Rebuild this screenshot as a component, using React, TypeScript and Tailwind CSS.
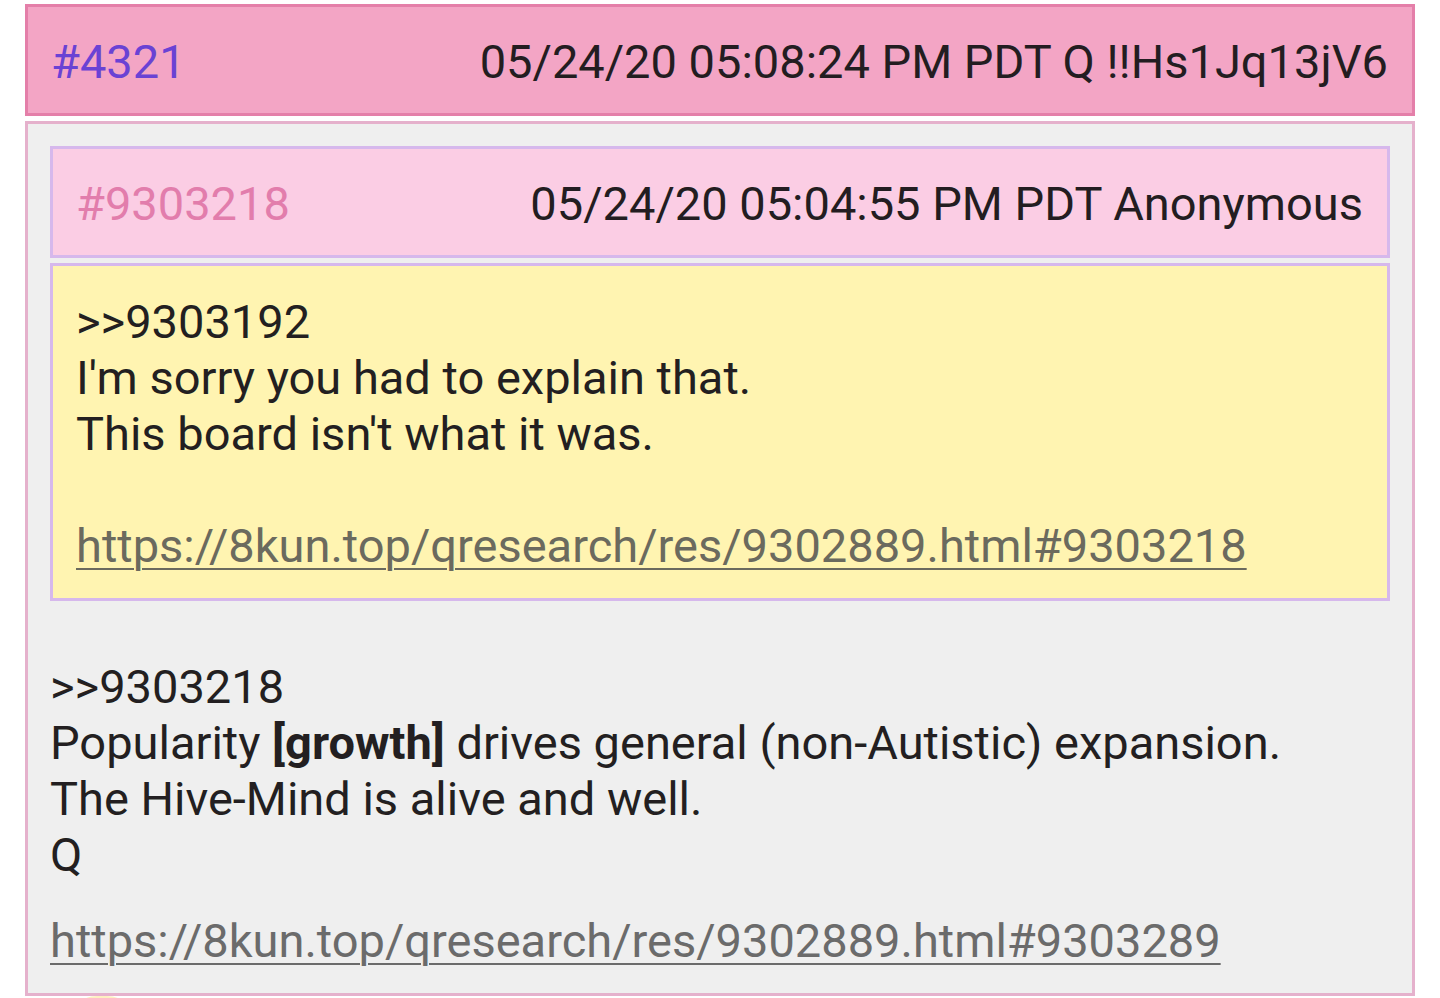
import React from "react";

const font = { fontFamily: "Roboto, 'Noto Sans', Arial, sans-serif" };

function PostHeader({
  id,
  meta,
  idClass,
  boxClass,
}: {
  id: string;
  meta: string;
  idClass: string;
  boxClass: string;
}) {
  return (
    <div className={`flex items-center justify-between h-[112px] pl-[23px] pr-6 pt-[4px] ${boxClass}`}>
      <span className={idClass}>{id}</span>
      <span className="text-[#231d21]">{meta}</span>
    </div>
  );
}

export default function App() {
  return (
    <div
      style={font}
      className="min-h-[998px] bg-white px-[25px] pt-[4px] text-[47px] leading-[56px] text-[#231f21] overflow-hidden"
    >
      <PostHeader
        id="#4321"
        meta="05/24/20 05:08:24 PM PDT Q !!Hs1Jq13jV6"
        idClass="text-[#6a42d4]"
        boxClass="bg-[#f3a5c5] border-[3px] border-[#e47fa9]"
      />

      <div className="mt-[5px] border-[3px] border-[#e5b1cc] bg-[#efefef] px-[22px] pt-[22px] pb-[24px]">
        <PostHeader
          id="#9303218"
          meta="05/24/20 05:04:55 PM PDT Anonymous"
          idClass="text-[#e27dac]"
          boxClass="bg-[#fbcde4] border-[3px] border-[#d6b8ec]"
        />

        <div className="mt-[5px] border-[3px] border-[#d6b8ec] bg-[#fff4b1] pl-[23px] pr-6 pt-[28px] pb-[24px]">
          <p>&gt;&gt;9303192</p>
          <p>I'm sorry you had to explain that.</p>
          <p>This board isn't what it was.</p>
          <p>&nbsp;</p>
          <a className="text-[#6b6a5e] underline decoration-2 underline-offset-[6px]">
            https://8kun.top/qresearch/res/9302889.html#9303218
          </a>
        </div>

        <div className="mt-[58px]">
          <p>&gt;&gt;9303218</p>
          <p>
            Popularity <b className="font-bold">[growth]</b> drives general (non-Autistic) expansion.
          </p>
          <p>The Hive-Mind is alive and well.</p>
          <p>Q</p>
          <a className="mt-[30px] block text-[#6b6b6b] underline decoration-2 underline-offset-[6px]">
            https://8kun.top/qresearch/res/9302889.html#9303289
          </a>
        </div>
      </div>

      <div className="ml-[42px] h-[60px] w-[70px] rounded-full bg-[#fdeaa6] opacity-70" />
    </div>
  );
}
